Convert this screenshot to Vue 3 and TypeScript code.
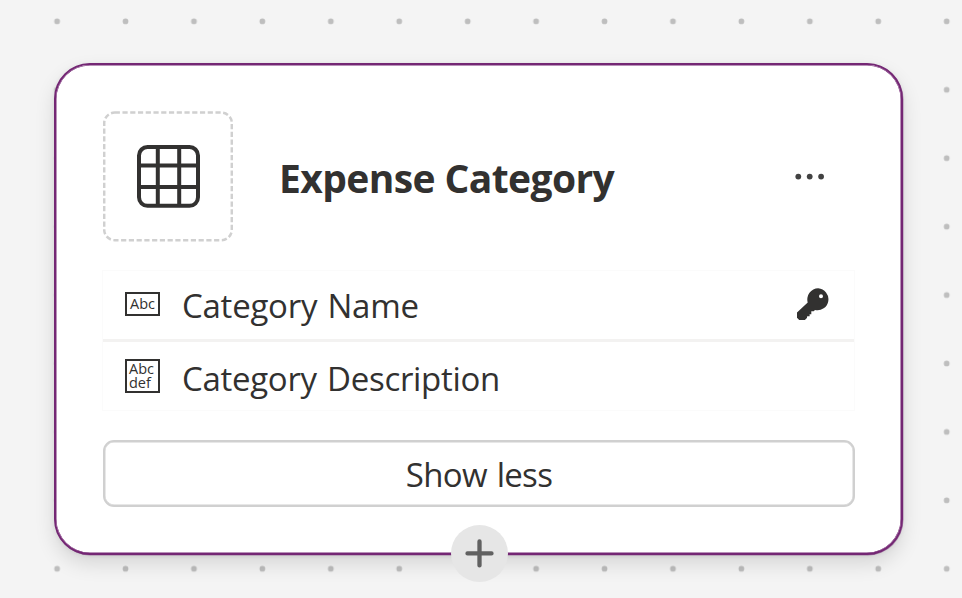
<script setup lang="ts">
interface Column {
  name: string
  kind: 'text' | 'multiline'
  primary: boolean
}

const title = 'Expense Category'
const columns: Column[] = [
  { name: 'Category Name', kind: 'text', primary: true },
  { name: 'Category Description', kind: 'multiline', primary: false },
]
const glyphs: Record<Column['kind'], string> = {
  text: 'Abc',
  multiline: 'Abc\ndef',
}
</script>

<template>
  <main class="canvas">
    <svg class="grid-dots" width="962" height="598" aria-hidden="true">
      <defs>
        <pattern id="dots" x="22.9" y="-12.8" width="68.43" height="68.43" patternUnits="userSpaceOnUse">
          <circle cx="34.2" cy="34.2" r="2.85" fill="#bebebe" />
        </pattern>
      </defs>
      <rect width="962" height="598" fill="url(#dots)" />
    </svg>
    <article class="card">
      <header class="head">
        <div class="tile">
          <svg width="130" height="131" viewBox="0 0 130 131" fill="none">
            <rect x="1.2" y="1.6" width="127.6" height="127.6" rx="10.5" stroke="#d0d0d0" stroke-width="2.5" stroke-dasharray="5.2 2.55" />
            <g stroke="#323130" stroke-width="4">
              <rect x="36" y="36" width="59" height="58.8" rx="8.5" />
              <path d="M54.8 36v59M76.2 36v59M36 54.5h59M36 76h59" />
            </g>
          </svg>
        </div>
        <h1 class="title">{{ title }}</h1>
        <button class="more" aria-label="More options">
          <svg width="30" height="8" viewBox="0 0 30 8" fill="#424242">
            <circle cx="3.3" cy="3.6" r="2.9" /><circle cx="14.7" cy="3.6" r="2.9" /><circle cx="26.1" cy="3.6" r="2.9" />
          </svg>
        </button>
      </header>
      <ul class="columns">
        <li v-for="column in columns" :key="column.name" class="column">
          <span class="kind" :class="column.kind">{{ glyphs[column.kind] }}</span>
          <span class="name" :class="column.kind">{{ column.name }}</span>
          <svg v-if="column.primary" class="key" width="34" height="34" viewBox="0 0 34 34">
            <path fill="#323130" fill-rule="evenodd" d="M22.2 1.3a11 11 0 1 1-3.2 21.7l-1.3 1.2h-2.4v3h-1.7v2H11.2l-.3 1.7-2 2H3.2L1 30.7V25.5l10.7-10A11.2 11.2 0 0 1 22.2 1.3ZM25 7.3a2 2 0 1 0 0 4 2 2 0 0 0 0-4Z" />
          </svg>
        </li>
      </ul>
      <button class="toggle"><span>Show less</span></button>
      <button class="add" aria-label="Add">
        <svg width="30" height="30" viewBox="0 0 30 30" fill="none" stroke="#616161" stroke-width="4.3" stroke-linecap="round">
          <path d="M14.5 2.4v24M2.5 14.4h24" />
        </svg>
      </button>
    </article>
  </main>
</template>

<style>
body {
  margin: 0;
  overflow: hidden;
}
</style>

<style scoped>
.canvas {
  position: relative;
  box-sizing: border-box;
  width: 962px;
  height: 598px;
  padding: 63px 0 0 54px;
  overflow: hidden;
  background: #f4f4f4;
  color: #323130;
  font-family: "Open Sans", "Noto Sans", sans-serif;
}
.grid-dots {
  position: absolute;
  inset: 0;
}
.card {
  position: relative;
  box-sizing: border-box;
  width: 849px;
  height: 492px;
  padding: 46px 46px 0 47px;
  border: 2px solid #742774;
  border-radius: 36px;
  background: #fff;
  box-shadow:
    inset 0 0 0 0.5px #742774,
    0.5px 0.5px 0 0 rgba(116, 39, 116, 0.5),
    0 9px 20px rgba(0, 0, 0, 0.12),
    0 1px 5px rgba(0, 0, 0, 0.07);
}
button {
  padding: 0;
  border: 0;
  background: none;
  color: inherit;
  font: inherit;
}
svg {
  display: block;
}
.head {
  display: flex;
  align-items: center;
  height: 131px;
}
.title {
  flex: 1;
  margin: 3px 0 0 46px;
  font-size: 39px;
  line-height: 54px;
  font-weight: 700;
  letter-spacing: -0.6px;
  white-space: nowrap;
}
.more {
  margin-right: 30px;
}
.columns {
  box-sizing: border-box;
  height: 141px;
  margin: 28px 0 0 -1px;
  padding: 0;
  border: 1px solid #fbfbfb;
  list-style: none;
}
.column {
  box-sizing: border-box;
  display: flex;
  align-items: center;
  height: 68px;
  padding: 0 24px 0 22px;
}
.column:first-child {
  height: 71px;
  padding-bottom: 3px;
  border-bottom: 3px solid #f3f2f1;
}
.kind {
  box-sizing: border-box;
  width: 35px;
  height: 24px;
  padding: 3px 0 0 3px;
  border: 2px solid #323130;
  font-size: 14.5px;
  line-height: 14px;
  white-space: pre-line;
}
.kind.multiline {
  height: 34px;
  padding: 1px 0 0 2px;
}
.name {
  flex: 1;
  margin: 5px 0 0 22px;
  font-size: 33px;
  line-height: 46px;
  letter-spacing: -0.25px;
  word-spacing: 2px;
  white-space: nowrap;
}
.name.multiline {
  letter-spacing: -0.3px;
}
.toggle {
  box-sizing: border-box;
  width: 752px;
  height: 67px;
  padding-top: 2px;
  margin-top: 29px;
  border: 2px solid #d0d0d0;
  border-radius: 11px;
  box-shadow: inset 0 0 0 0.5px #d0d0d0;
  font-size: 33px;
  line-height: 46px;
  letter-spacing: -0.7px;
  word-spacing: 2px;
}
.add {
  position: absolute;
  left: 395px;
  bottom: -29px;
  display: grid;
  place-items: center;
  width: 57px;
  height: 57px;
  border-radius: 50%;
  background: #e6e6e6;
}
</style>
